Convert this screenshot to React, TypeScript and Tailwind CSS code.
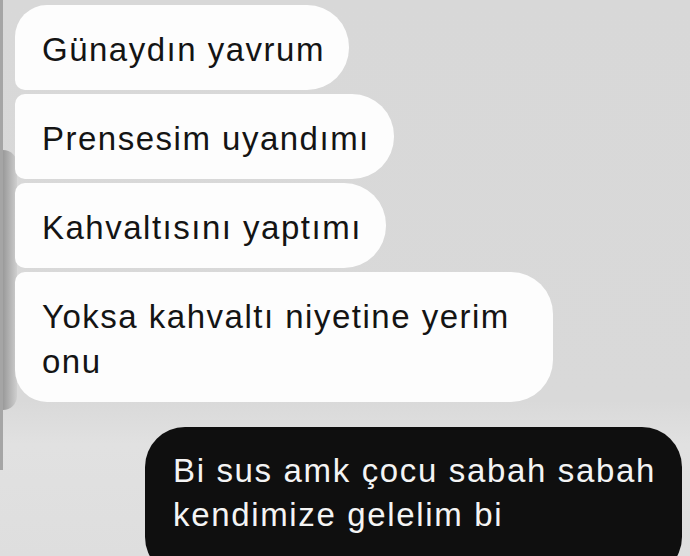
import React from 'react';

type Bubble = { id: number; text: string; shape: string };

const incoming: Bubble[] = [
  { id: 1, text: 'Günaydın yavrum', shape: 'rounded-tl-[32px] rounded-bl-[10px]' },
  { id: 2, text: 'Prensesim uyandımı', shape: 'rounded-tl-[10px] rounded-bl-[10px]' },
  { id: 3, text: 'Kahvaltısını yaptımı', shape: 'rounded-tl-[10px] rounded-bl-[10px]' },
  { id: 4, text: 'Yoksa kahvaltı niyetine yerim onu', shape: 'rounded-tl-[10px] rounded-bl-[32px]' },
];

const App: React.FC = () => {
  return (
    <div className="relative w-[690px] h-[556px] overflow-hidden bg-[linear-gradient(to_bottom,#d8d8d8_0%,#d9d9d9_72%,#e1e1e1_80%,#dedede_100%)] font-['Liberation_Sans',Arial,sans-serif]">
      {/* soft backdrop along the left edge */}
      <div className="absolute left-0 top-0 h-[470px] w-[3px] bg-[#a5a5a5]" />
      <div className="absolute left-[3px] top-[150px] h-[260px] w-[14px] bg-gradient-to-r from-[#9a9a9a] to-[#cfcfcf] rounded-r-[14px]" />

      <div className="relative flex flex-col pl-[15px] pr-[8px] pt-[5px]">
        <div className="flex flex-col items-start gap-[4px]">
          {incoming.map((m) => (
            <div
              key={m.id}
              className={`max-w-[538px] bg-[#fdfdfd] text-[#141414] text-[33px] leading-[45px] tracking-[1.5px] pl-[27px] pr-[24px] pt-[22px] pb-[18px] rounded-r-[42px] ${m.shape}`}
            >
              {m.text}
            </div>
          ))}
        </div>

        <div className="mt-[25px] flex justify-end">
          <div className="w-[537px] bg-[#0f0f0f] text-[#f4f4f4] text-[33px] leading-[44px] tracking-[1.65px] pl-[28px] pr-[16px] pt-[22px] pb-[40px] rounded-[40px]">
            Bi sus amk çocu sabah sabah kendimize gelelim bi
          </div>
        </div>
      </div>
    </div>
  );
};

export default App;
